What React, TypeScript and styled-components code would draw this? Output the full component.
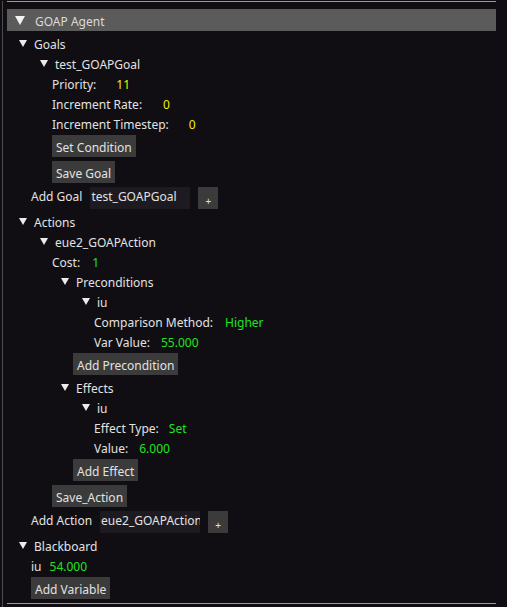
import React from "react";
import styled, { createGlobalStyle } from "styled-components";

const GlobalStyle = createGlobalStyle`
  html, body {
    margin: 0;
    padding: 0;
    background: #100e13;
  }
  * { box-sizing: border-box; }
`;

const Page = styled.div`
  width: 507px;
  height: 607px;
  background: #100e13;
  padding: 1px 0 0 2px;
  font-family: "Noto Sans", "Open Sans", sans-serif;
  font-size: 12px;
  color: #e2e2e2;
  overflow: hidden;
`;

const Frame = styled.div`
  height: 100%;
  border-left: 1px solid #4c4c4c;
  padding-left: 4px;
`;

const Panel = styled.div`
  width: 489px;
  border-top: 1px solid #9a9aa2;
  border-bottom: 1px solid #9a9aa2;
  padding: 7px 0 4px;
`;

const Header = styled.div`
  display: flex;
  align-items: flex-start;
  height: 22px;
  background: #5b5b5b;
  padding: 3px 0 0 8px;
  line-height: 19px;
  color: #dadada;
`;

const HeaderArrow = styled.span`
  width: 0;
  height: 0;
  margin: 4px 10px 0 0;
  border-left: 5px solid transparent;
  border-right: 5px solid transparent;
  border-top: 9px solid #f2f2f2;
`;

const Column = styled.div`
  display: flex;
  flex-direction: column;
  align-items: flex-start;
  gap: 4px;
`;

const Body = styled(Column)`
  padding: 4px 0 0 3px;
`;

const Children = styled(Column)`
  margin-left: 21px;
`;

const NodeRow = styled.div`
  display: flex;
  align-items: flex-start;
  height: 16px;
  line-height: 19px;
  white-space: nowrap;
`;

const Arrow = styled.span`
  width: 0;
  height: 0;
  margin: 5px 7px 0 9px;
  border-left: 4px solid transparent;
  border-right: 4px solid transparent;
  border-top: 7px solid #ececec;
`;

const TextRow = styled.div<{ $gap?: number }>`
  display: flex;
  gap: ${(p) => p.$gap ?? 8}px;
  height: 16px;
  line-height: 19px;
  white-space: nowrap;
`;

const Value = styled.span<{ $tone: "yellow" | "green" }>`
  color: ${(p) => (p.$tone === "yellow" ? "#f0f000" : "#1fe41f")};
`;

const Button = styled.button`
  height: 22px;
  padding: 3px 4px 0;
  border: none;
  border-radius: 0;
  background: #3b3b3b;
  color: #e2e2e2;
  font: inherit;
  line-height: 19px;
  white-space: nowrap;
`;

const InlineRow = styled.div`
  display: flex;
  align-items: flex-start;
  gap: 8px;
  height: 22px;
`;

const Label = styled.span`
  line-height: 19px;
  height: 16px;
  white-space: nowrap;
`;

const Input = styled.input`
  width: 100px;
  height: 22px;
  padding: 0 0 3px 1px;
  border: none;
  outline: none;
  background: #1d1b21;
  color: #e2e2e2;
  font: inherit;
`;

const PlusButton = styled(Button)`
  width: 20px;
  padding: 5px 0 0;
  font-size: 10px;
  line-height: 14px;
`;

function Node({ label, children }: { label: string; children: React.ReactNode }) {
  return (
    <Column>
      <NodeRow>
        <Arrow />
        {label}
      </NodeRow>
      <Children>{children}</Children>
    </Column>
  );
}

function Field({ label, value, tone, gap }: { label: string; value: string; tone: "yellow" | "green"; gap: number }) {
  return (
    <TextRow $gap={gap}>
      <span>{label}</span>
      <Value $tone={tone}>{value}</Value>
    </TextRow>
  );
}

function AddRow({ label, value }: { label: string; value: string }) {
  return (
    <InlineRow>
      <Label>{label}</Label>
      <Input readOnly value={value} />
      <PlusButton>+</PlusButton>
    </InlineRow>
  );
}

export default function App() {
  return (
    <Page>
      <GlobalStyle />
      <Frame>
        <Panel>
          <Header>
            <HeaderArrow />
            GOAP Agent
          </Header>
          <Body>
            <Node label="Goals">
              <Node label="test_GOAPGoal">
                <Field label="Priority:" value="11" tone="yellow" gap={20} />
                <Field label="Increment Rate:" value="0" tone="yellow" gap={21} />
                <Field label="Increment Timestep:" value="0" tone="yellow" gap={20} />
                <Button>Set Condition</Button>
                <Button>Save Goal</Button>
              </Node>
              <AddRow label="Add Goal" value="test_GOAPGoal" />
            </Node>
            <Node label="Actions">
              <Node label="eue2_GOAPAction">
                <Field label="Cost:" value="1" tone="green" gap={12} />
                <Node label="Preconditions">
                  <Node label="iu">
                    <Field label="Comparison Method:" value="Higher" tone="green" gap={12} />
                    <Field label="Var Value:" value="55.000" tone="green" gap={11} />
                  </Node>
                  <Button>Add Precondition</Button>
                </Node>
                <Node label="Effects">
                  <Node label="iu">
                    <Field label="Effect Type:" value="Set" tone="green" gap={10} />
                    <Field label="Value:" value="6.000" tone="green" gap={11} />
                  </Node>
                  <Button>Add Effect</Button>
                </Node>
                <Button>Save_Action</Button>
              </Node>
              <AddRow label="Add Action" value="eue2_GOAPAction" />
            </Node>
            <Node label="Blackboard">
              <Field label="iu" value="54.000" tone="green" gap={8} />
              <Button>Add Variable</Button>
            </Node>
          </Body>
        </Panel>
      </Frame>
    </Page>
  );
}
